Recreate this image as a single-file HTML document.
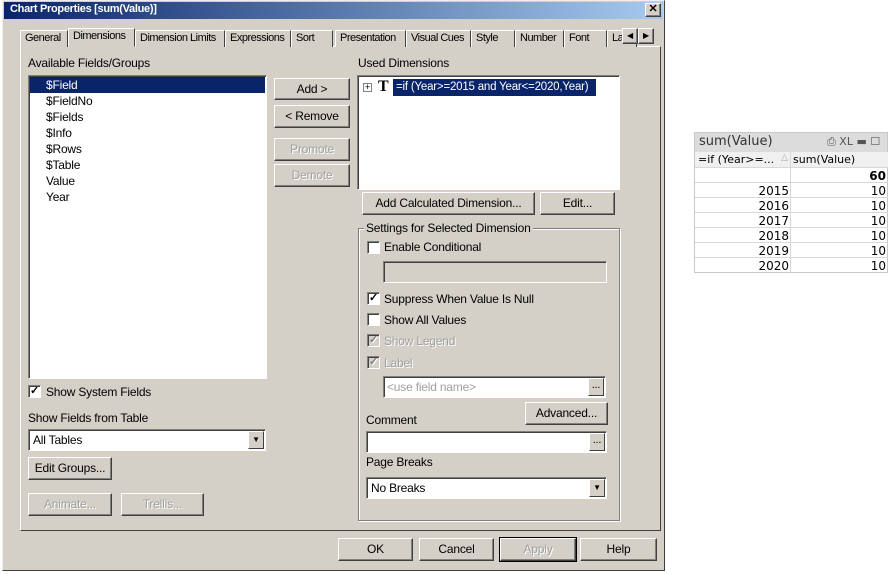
<!DOCTYPE html><html><head><style>
*{box-sizing:border-box;margin:0;padding:0}
body{width:895px;height:574px;background:#fff;position:relative;overflow:hidden;font-family:"Liberation Sans",sans-serif;font-size:11px;color:#000;letter-spacing:-0.2px}
.a{position:absolute}
.dlg{left:2px;top:0;width:663px;height:571px;background:#d4d0c8;border:1px solid;border-color:#eee #404040 #404040 #eee}
.btn{position:absolute;background:#d4d0c8;border:1px solid;border-color:#fff #404040 #404040 #fff;box-shadow:inset -1px -1px 0 #808080;text-align:center;font-size:12px}
.dis{color:#a0a0a0;text-shadow:1px 1px 0 #fff}
.sunk{position:absolute;background:#fff;border:1px solid;border-color:#808080 #fff #fff #808080;box-shadow:inset 1px 1px 0 #404040}
.cb{position:absolute;width:13px;height:13px;background:#fff;border:1px solid;border-color:#808080 #fff #fff #808080;box-shadow:inset 1px 1px 0 #404040;font-size:11px;line-height:11px;text-align:center;font-weight:bold}
.lbl{position:absolute;font-size:12px;white-space:nowrap}
.tab{position:absolute;top:30px;height:17px;border:1px solid;border-bottom:none;border-color:#fff #404040 #404040 #fff;font-size:11px;line-height:15px;padding-left:4px;background:#d4d0c8;white-space:nowrap;overflow:hidden;letter-spacing:-0.5px}
.dd{position:absolute;right:1px;top:1px;width:16px;bottom:1px;background:#d4d0c8;border:1px solid;border-color:#fff #404040 #404040 #fff;font-size:8px;text-align:center;line-height:16px}
.row{position:absolute;left:0;width:193px;height:15px;border-bottom:1px solid #d8d8d8;font-size:12px}
.row span{position:absolute;top:1px}
.row .y{right:99px}
</style></head><body>
<div class="a dlg"></div>
<div class="a" style="left:4px;top:2px;width:659px;height:17px;background:linear-gradient(90deg,#0a246a,#a6caf0)"></div>
<div class="a" style="left:10px;top:3px;color:#fff;font-weight:bold;font-size:11px;letter-spacing:-0.3px">Chart Properties [sum(Value)]</div>
<div class="btn" style="left:645px;top:3px;width:16px;height:14px;font-size:11px;line-height:11px;font-weight:bold">✕</div>
<div class="a" style="left:20px;top:46px;width:641px;height:485px;border:1px solid;border-color:#fff #404040 #404040 #fff"></div>
<div class="tab" style="left:20px;width:48px">General</div>
<div class="tab" style="left:68px;top:28px;height:19px;width:67px;z-index:2;border-bottom:1px solid #d4d0c8">Dimensions</div>
<div class="tab" style="left:135px;width:90px">Dimension Limits</div>
<div class="tab" style="left:225px;width:66px">Expressions</div>
<div class="tab" style="left:291px;width:42px">Sort</div>
<div class="tab" style="left:335px;width:71px">Presentation</div>
<div class="tab" style="left:406px;width:65px">Visual Cues</div>
<div class="tab" style="left:471px;width:44px">Style</div>
<div class="tab" style="left:515px;width:49px">Number</div>
<div class="tab" style="left:564px;width:43px">Font</div>
<div class="tab" style="left:607px;width:30px">La</div>
<div class="btn" style="left:622px;top:28px;width:16px;height:16px;font-size:8px;line-height:14px">◀</div>
<div class="btn" style="left:638px;top:28px;width:16px;height:16px;font-size:8px;line-height:14px">▶</div>
<div class="lbl" style="left:28px;top:56px">Available Fields/Groups</div>
<div class="sunk" style="left:28px;top:75px;width:239px;height:304px"></div>
<div class="a" style="left:30px;top:77px;width:235px;height:16px;background:#0a246a"></div>
<div class="lbl" style="left:46px;top:78px;color:#fff">$Field</div>
<div class="lbl" style="left:46px;top:94px">$FieldNo</div>
<div class="lbl" style="left:46px;top:110px">$Fields</div>
<div class="lbl" style="left:46px;top:126px">$Info</div>
<div class="lbl" style="left:46px;top:142px">$Rows</div>
<div class="lbl" style="left:46px;top:158px">$Table</div>
<div class="lbl" style="left:46px;top:174px">Value</div>
<div class="lbl" style="left:46px;top:190px">Year</div>
<div class="btn" style="left:274px;top:78px;width:76px;height:22px;line-height:20px">Add &gt;</div>
<div class="btn" style="left:274px;top:105px;width:76px;height:23px;line-height:21px">&lt; Remove</div>
<div class="btn dis" style="left:274px;top:138px;width:76px;height:23px;line-height:21px">Promote</div>
<div class="btn dis" style="left:274px;top:164px;width:76px;height:23px;line-height:21px">Demote</div>
<div class="cb" style="left:28px;top:385px">✓</div>
<div class="lbl" style="left:46px;top:385px">Show System Fields</div>
<div class="lbl" style="left:28px;top:411px">Show Fields from Table</div>
<div class="sunk" style="left:28px;top:429px;width:238px;height:22px"><span class="lbl" style="left:4px;top:3px">All Tables</span><div class="dd">▼</div></div>
<div class="btn" style="left:28px;top:457px;width:84px;height:23px;line-height:21px">Edit Groups...</div>
<div class="btn dis" style="left:28px;top:493px;width:84px;height:23px;line-height:21px">Animate...</div>
<div class="btn dis" style="left:121px;top:493px;width:83px;height:23px;line-height:21px">Trellis...</div>
<div class="lbl" style="left:358px;top:56px">Used Dimensions</div>
<div class="sunk" style="left:357px;top:75px;width:263px;height:115px"></div>
<div class="a" style="left:363px;top:83px;width:9px;height:9px;border:1px solid #808080;background:#fff;font-size:9px;line-height:7px;text-align:center">+</div>
<div class="a" style="left:378px;top:78px;font-family:'Liberation Serif',serif;font-weight:bold;font-size:16px">T</div>
<div class="a" style="left:393px;top:79px;width:203px;height:17px;background:#0a246a"></div>
<div class="lbl" style="left:396px;top:81px;color:#fff;font-size:11.5px">=if (Year&gt;=2015 and Year&lt;=2020,Year)</div>
<div class="btn" style="left:362px;top:192px;width:173px;height:23px;line-height:21px">Add Calculated Dimension...</div>
<div class="btn" style="left:540px;top:192px;width:75px;height:23px;line-height:21px">Edit...</div>
<div class="a" style="left:358px;top:228px;width:262px;height:293px;border:1px solid #808080;box-shadow:1px 1px 0 #fff,inset 1px 1px 0 #fff"></div>
<div class="lbl" style="left:364px;top:221px;background:#d4d0c8;padding:0 2px">Settings for Selected Dimension</div>
<div class="cb" style="left:367px;top:241px"></div><div class="lbl" style="left:384px;top:240px">Enable Conditional</div>
<div class="a" style="left:383px;top:261px;width:224px;height:22px;border:1px solid;border-color:#808080 #fff #fff #808080;box-shadow:inset 1px 1px 0 #404040"></div>
<div class="cb" style="left:367px;top:292px">✓</div><div class="lbl" style="left:384px;top:292px">Suppress When Value Is Null</div>
<div class="cb" style="left:367px;top:313px"></div><div class="lbl" style="left:384px;top:313px">Show All Values</div>
<div class="cb dis" style="left:367px;top:334px;background:#d4d0c8;color:#808080">✓</div><div class="lbl dis" style="left:384px;top:334px">Show Legend</div>
<div class="cb dis" style="left:367px;top:356px;background:#d4d0c8;color:#808080">✓</div><div class="lbl dis" style="left:384px;top:356px">Label</div>
<div class="sunk" style="left:383px;top:376px;width:223px;height:22px"><span class="lbl" style="left:3px;top:3px;color:#a0a0a0">&lt;use field name&gt;</span><div class="dd" style="font-size:11px;line-height:12px">...</div></div>
<div class="btn" style="left:525px;top:402px;width:83px;height:23px;line-height:21px">Advanced...</div>
<div class="lbl" style="left:366px;top:413px">Comment</div>
<div class="sunk" style="left:366px;top:431px;width:241px;height:22px"><div class="dd" style="font-size:11px;line-height:12px">...</div></div>
<div class="lbl" style="left:366px;top:455px">Page Breaks</div>
<div class="sunk" style="left:366px;top:477px;width:241px;height:22px"><span class="lbl" style="left:4px;top:3px">No Breaks</span><div class="dd">▼</div></div>
<div class="btn" style="left:338px;top:538px;width:75px;height:23px;line-height:21px">OK</div>
<div class="btn" style="left:419px;top:538px;width:75px;height:23px;line-height:21px">Cancel</div>
<div class="btn dis" style="left:500px;top:538px;width:76px;height:23px;line-height:21px;outline:1px solid #000">Apply</div>
<div class="btn" style="left:580px;top:538px;width:77px;height:23px;line-height:21px">Help</div>
<div class="a" style="left:694px;top:132px;width:194px;height:141px;border:1px solid #c8c8c8;background:#fff;font-family:'DejaVu Sans',sans-serif;letter-spacing:0">
<div class="a" style="left:0;top:0;width:192px;height:19px;background:#dcdcdc"></div>
<div class="a" style="left:4px;top:1px;font-size:13px;color:#333">sum(Value)</div>
<div class="a" style="left:132px;top:2px;font-size:11px;color:#555">⎙ XL ▬ ☐</div>
<div class="row" style="top:19px;height:16px;background:#f0f0f0"><span style="left:3px;font-size:11px">=if (Year&gt;=...</span><span style="left:86px;color:#aaa;font-size:9px">△</span><span style="left:98px;font-size:11px">sum(Value)</span></div>
<div class="row" style="top:35px"><span style="right:2px;font-weight:bold">60</span></div>
<div class="row" style="top:50px"><span class="y">2015</span><span style="right:2px">10</span></div>
<div class="row" style="top:65px"><span class="y">2016</span><span style="right:2px">10</span></div>
<div class="row" style="top:80px"><span class="y">2017</span><span style="right:2px">10</span></div>
<div class="row" style="top:95px"><span class="y">2018</span><span style="right:2px">10</span></div>
<div class="row" style="top:110px"><span class="y">2019</span><span style="right:2px">10</span></div>
<div class="row" style="top:125px;border:none"><span class="y">2020</span><span style="right:2px">10</span></div>
<div class="a" style="left:95px;top:19px;width:1px;height:121px;background:#d8d8d8"></div>
</div>
</body></html>
